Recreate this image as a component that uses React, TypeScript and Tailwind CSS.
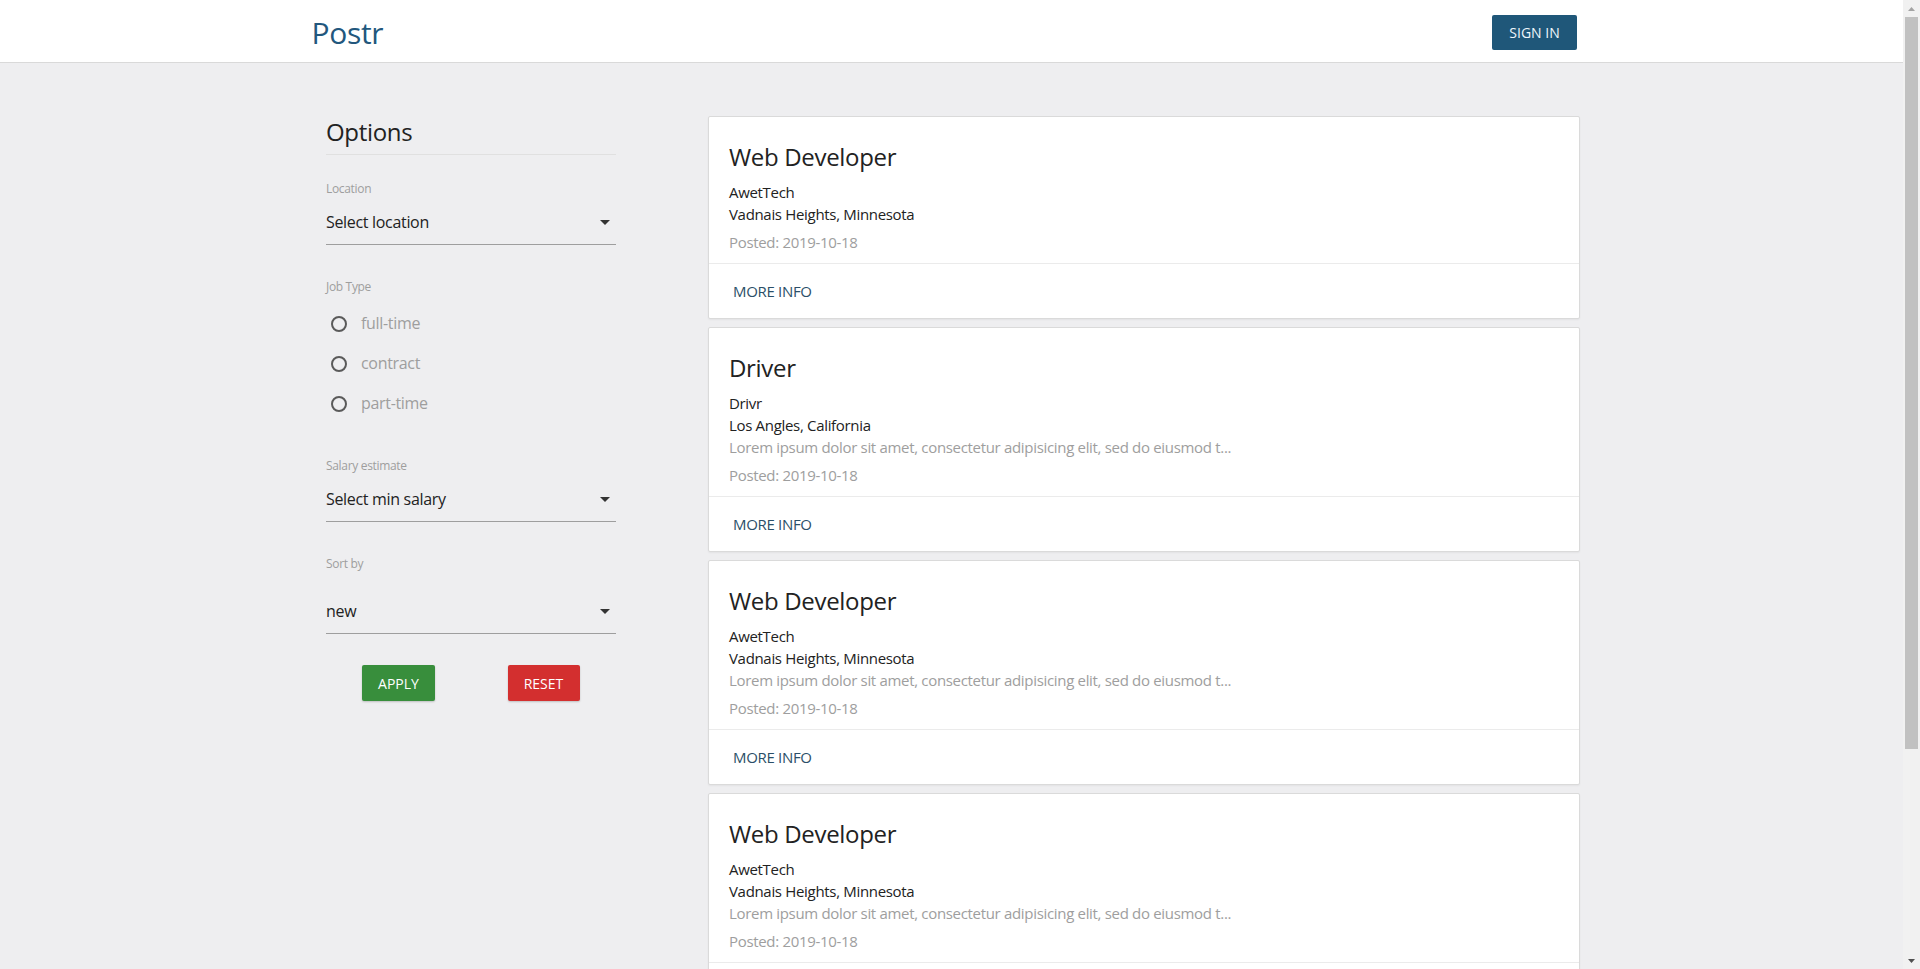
import React from "react";

interface Job {
  id: number;
  title: string;
  company: string;
  location: string;
  description?: string;
  posted: string;
}

const jobs: Job[] = [
  {
    id: 1,
    title: "Web Developer",
    company: "AwetTech",
    location: "Vadnais Heights, Minnesota",
    posted: "2019-10-18",
  },
  {
    id: 2,
    title: "Driver",
    company: "Drivr",
    location: "Los Angles, California",
    description: "Lorem ipsum dolor sit amet, consectetur adipisicing elit, sed do eiusmod t...",
    posted: "2019-10-18",
  },
  {
    id: 3,
    title: "Web Developer",
    company: "AwetTech",
    location: "Vadnais Heights, Minnesota",
    description: "Lorem ipsum dolor sit amet, consectetur adipisicing elit, sed do eiusmod t...",
    posted: "2019-10-18",
  },
  {
    id: 4,
    title: "Web Developer",
    company: "AwetTech",
    location: "Vadnais Heights, Minnesota",
    description: "Lorem ipsum dolor sit amet, consectetur adipisicing elit, sed do eiusmod t...",
    posted: "2019-10-18",
  },
];

function Caret() {
  return (
    <svg width="10" height="5" viewBox="0 0 10 5" className="text-[#333]">
      <path d="M0 0h10L5 5z" fill="currentColor" />
    </svg>
  );
}

function FakeSelect({ value }: { value: string }) {
  return (
    <div className="flex items-center justify-between pb-[10px] pr-[6px] border-b border-[#9e9e9e] cursor-pointer">
      <span className="text-[16px] leading-6 text-[#222]">{value}</span>
      <Caret />
    </div>
  );
}

function FieldLabel({ children }: { children: React.ReactNode }) {
  return <div className="text-[12px] leading-4 text-[#9e9e9e]">{children}</div>;
}

function Radio({ label }: { label: string }) {
  return (
    <label className="h-[25px] flex items-center cursor-pointer">
      <span className="ml-[5px] w-4 h-4 rounded-full border-2 border-[#5a5a5a]" />
      <span className="ml-[14px] text-[16px] leading-[25px] text-[#9e9e9e]">{label}</span>
    </label>
  );
}

function Sidebar() {
  return (
    <aside className="w-[290px] shrink-0">
      <h5 className="text-[24px] leading-8 text-[#222] pb-[6px] border-b border-[#e0e0e0]">Options</h5>

      <div className="mt-[26px]">
        <FieldLabel>Location</FieldLabel>
        <div className="mt-[13px]">
          <FakeSelect value="Select location" />
        </div>
      </div>

      <div className="mt-[34px]">
        <FieldLabel>Job Type</FieldLabel>
        <div className="mt-4 flex flex-col gap-[15px]">
          <Radio label="full-time" />
          <Radio label="contract" />
          <Radio label="part-time" />
        </div>
      </div>

      <div className="mt-[42px]">
        <FieldLabel>Salary estimate</FieldLabel>
        <div className="mt-[13px]">
          <FakeSelect value="Select min salary" />
        </div>
      </div>

      <div className="mt-[34px]">
        <FieldLabel>Sort by</FieldLabel>
        <div className="mt-[27px]">
          <FakeSelect value="new" />
        </div>
      </div>

      <div className="mt-[31px] grid grid-cols-2">
        <div className="flex justify-center">
          <button className="h-9 w-[73px] rounded-[2px] bg-[#388e3c] text-white text-[14px] tracking-normal uppercase shadow-[0_1px_2px_rgba(0,0,0,0.2)]">
            Apply
          </button>
        </div>
        <div className="flex justify-center">
          <button className="h-9 w-[72px] rounded-[2px] bg-[#d32f2f] text-white text-[14px] tracking-normal uppercase shadow-[0_1px_2px_rgba(0,0,0,0.2)]">
            Reset
          </button>
        </div>
      </div>
    </aside>
  );
}

function JobCard({ job }: { job: Job }) {
  return (
    <div className="bg-white border border-[#dadada] rounded-[2px] shadow-[0_1px_2px_rgba(0,0,0,0.05)]">
      <div className="px-5 pt-6 pb-[10px]">
        <h2 className="text-[24px] leading-8 text-[#222] mb-2">{job.title}</h2>
        <p className="text-[15px] leading-[22px] text-[#222]">{job.company}</p>
        <p className="text-[15px] leading-[22px] text-[#222]">{job.location}</p>
        {job.description && (
          <p className="text-[15px] leading-[22px] text-[#9e9e9e]">{job.description}</p>
        )}
        <p className="mt-[6px] text-[15px] leading-[22px] text-[#9e9e9e]">Posted: {job.posted}</p>
      </div>
      <div className="border-t border-[#ebebeb] px-6 py-[15px]">
        <a href="#" className="text-[15px] leading-[22px] uppercase text-[#2b4f68]">
          More info
        </a>
      </div>
    </div>
  );
}

function Scrollbar() {
  return (
    <div className="w-[17px] shrink-0 bg-[#f1f1f1] flex flex-col items-center">
      <div className="h-[17px] flex items-center justify-center">
        <svg width="7" height="4" viewBox="0 0 7 4">
          <path d="M0 4L3.5 0 7 4z" fill="#a3a3a3" />
        </svg>
      </div>
      <div className="w-[13px] h-[732px] bg-[#c1c1c1]" />
      <div className="flex-1" />
      <div className="h-[17px] flex items-center justify-center">
        <svg width="7" height="4" viewBox="0 0 7 4">
          <path d="M0 0h7L3.5 4z" fill="#505050" />
        </svg>
      </div>
    </div>
  );
}

export default function App() {
  return (
    <div className="h-[969px] flex overflow-hidden bg-[#eeeef0] tracking-[-0.02em] font-['Open_Sans','Noto_Sans',sans-serif]">
      <div className="flex-1 flex flex-col min-w-0">
        <header className="h-[63px] shrink-0 bg-white border-b border-[#d9d9d9]">
          <div className="w-[1280px] mx-auto h-[62px] flex items-center justify-between pr-[14.5px]">
            <span className="self-start pt-[18px] text-[30px] leading-none text-[#22577d]">Postr</span>
            <button className="mt-[3px] h-[35px] w-[85px] rounded-[2px] bg-[#1f5779] text-[#eef6fb] text-[14px] tracking-normal uppercase">
              Sign in
            </button>
          </div>
        </header>

        <main className="flex-1 overflow-hidden">
          <div className="w-[1280px] mx-auto flex pl-[14.5px] pr-[11.5px] pt-[53px]">
            <Sidebar />
            <div className="ml-[92px] flex-1 flex flex-col gap-2">
              {jobs.map((job) => (
                <JobCard key={job.id} job={job} />
              ))}
            </div>
          </div>
        </main>
      </div>
      <Scrollbar />
    </div>
  );
}
